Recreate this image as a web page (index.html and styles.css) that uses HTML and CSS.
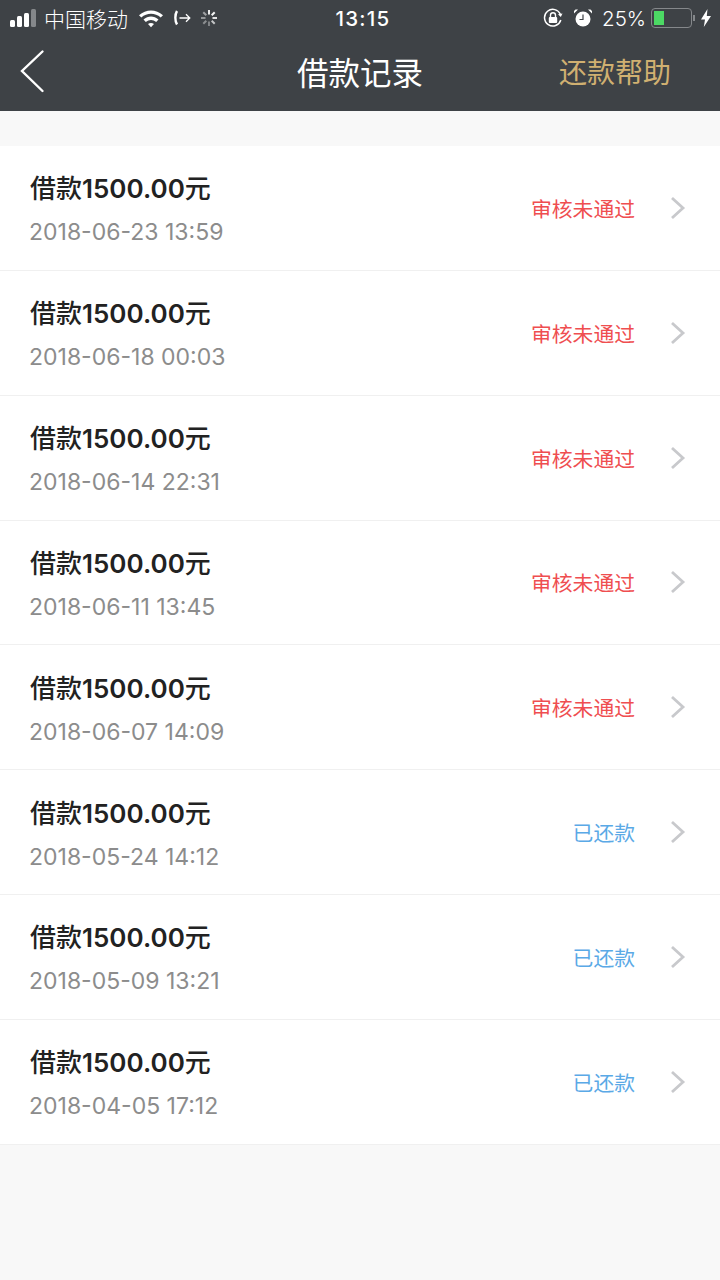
FILE: index.html
```html
<!DOCTYPE html>
<html lang="zh-CN">
<head>
    <meta charset="UTF-8">
    <meta name="viewport" content="width=device-width, initial-scale=1.0">
    <title>借款记录</title>
    <link rel="stylesheet" href="styles.css">
</head>
<body>
    <div class="header">
        <div class="status-bar">
            <div class="status-left">
                <div class="signal">
                    <span class="bar b1"></span><span class="bar b2"></span><span class="bar b3"></span><span class="bar b4"></span>
                </div>
                <span class="carrier">中国移动</span>
                <svg class="wifi" width="26" height="20" viewBox="0 0 26 20">
                    <path d="M1 7.200C8 .8 18 .8 25 7.200l-2.300 2.400C17 4.600 9 4.600 3.300 9.600z" fill="#fff"/>
                    <path d="M5.500 11.500c4.500-4 10.500-4 15 0l-2.300 2.400c-3.200-2.700-7.200-2.700-10.400 0z" fill="#fff"/>
                    <path d="M10 16c1.800-1.500 4.200-1.500 6 0l-3 3.200z" fill="#fff"/>
                </svg>
                <svg class="call" width="18" height="18" viewBox="0 0 18 18" fill="none" stroke="#fff">
                    <path d="M4 2C1.800 5.500 1.800 12 4 15.500" stroke-width="2.400"/>
                    <path d="M6.500 9h10M13 5.200 16.800 9 13 12.800" stroke-width="1.300"/>
                </svg>
                <svg class="spinner" width="18" height="18" viewBox="0 0 18 18" stroke="#fff" stroke-width="2">
                    <path d="M9 1v4.500" opacity=".9"/>
                    <path d="M14.700 3.300l-3 3" opacity=".95"/>
                    <path d="M17 9h-4.500" opacity=".85"/>
                    <path d="M14.700 14.700l-3-3" opacity=".7"/>
                    <path d="M9 17v-4.500" opacity=".35"/>
                    <path d="M3.300 14.700l3-3" opacity=".4"/>
                    <path d="M1 9h4.500" opacity=".45"/>
                    <path d="M3.300 3.300l3 3" opacity=".5"/>
                </svg>
            </div>
            <div class="clock">13:15</div>
            <div class="status-right">
                <svg class="lock" width="20" height="20" viewBox="0 0 20 20" fill="none" stroke="#fff">
                    <path d="M17.800 12A8.300 8.300 0 1 1 17.500 6.500" stroke-width="1.500"/>
                    <path d="M19.500 5.500 17.800 9 15 6.200z" fill="#fff" stroke="none"/>
                    <rect x="5.800" y="9" width="8.400" height="6" rx="1" fill="#fff" stroke="none"/>
                    <path d="M7.500 9V7.200a2.500 2.500 0 0 1 5 0V9" stroke-width="1.400"/>
                </svg>
                <svg class="alarm" width="20" height="20" viewBox="0 0 20 20">
                    <circle cx="10" cy="11" r="7.500" fill="#fff"/>
                    <path d="M1 5.500 5 1.500 2.500 1.500 1 3zM19 5.500 15 1.500 17.500 1.500 19 3z" fill="#fff"/>
                    <path d="M10 6.500V11.500H6.500" fill="none" stroke="#3e4246" stroke-width="1.200"/>
                </svg>
                <span class="percent">25%</span>
                <div class="battery"><span class="battery-level"></span></div>
                <span class="battery-tip"></span>
                <svg class="bolt" width="12" height="20" viewBox="0 0 12 20">
                    <path d="M7.500 1 1 11.500h4L3.800 19 11 8H6.800z" fill="#fff"/>
                </svg>
            </div>
        </div>
        <div class="nav">
            <a class="back">
                <svg width="26" height="44" viewBox="0 0 26 44" fill="none" stroke="#fff" stroke-width="2.400" stroke-linecap="round">
                    <path d="M22.500 2.500 2 22 22.500 42"/>
                </svg>
            </a>
            <h1 class="title">借款记录</h1>
            <a class="help">还款帮助</a>
        </div>
    </div>

    <div class="records">
        <div class="record">
            <div class="info">
                <div class="amount">借款<span class="num">1500.00</span>元</div>
                <div class="date">2018-06-23 13:59</div>
            </div>
            <span class="state rejected">审核未通过</span>
            <svg class="arrow" width="16" height="24" viewBox="0 0 16 24"><path d="M2 2l11 10L2 22"/></svg>
        </div>
        <div class="record">
            <div class="info">
                <div class="amount">借款<span class="num">1500.00</span>元</div>
                <div class="date">2018-06-18 00:03</div>
            </div>
            <span class="state rejected">审核未通过</span>
            <svg class="arrow" width="16" height="24" viewBox="0 0 16 24"><path d="M2 2l11 10L2 22"/></svg>
        </div>
        <div class="record">
            <div class="info">
                <div class="amount">借款<span class="num">1500.00</span>元</div>
                <div class="date">2018-06-14 22:31</div>
            </div>
            <span class="state rejected">审核未通过</span>
            <svg class="arrow" width="16" height="24" viewBox="0 0 16 24"><path d="M2 2l11 10L2 22"/></svg>
        </div>
        <div class="record">
            <div class="info">
                <div class="amount">借款<span class="num">1500.00</span>元</div>
                <div class="date">2018-06-11 13:45</div>
            </div>
            <span class="state rejected">审核未通过</span>
            <svg class="arrow" width="16" height="24" viewBox="0 0 16 24"><path d="M2 2l11 10L2 22"/></svg>
        </div>
        <div class="record">
            <div class="info">
                <div class="amount">借款<span class="num">1500.00</span>元</div>
                <div class="date">2018-06-07 14:09</div>
            </div>
            <span class="state rejected">审核未通过</span>
            <svg class="arrow" width="16" height="24" viewBox="0 0 16 24"><path d="M2 2l11 10L2 22"/></svg>
        </div>
        <div class="record">
            <div class="info">
                <div class="amount">借款<span class="num">1500.00</span>元</div>
                <div class="date">2018-05-24 14:12</div>
            </div>
            <span class="state repaid">已还款</span>
            <svg class="arrow" width="16" height="24" viewBox="0 0 16 24"><path d="M2 2l11 10L2 22"/></svg>
        </div>
        <div class="record">
            <div class="info">
                <div class="amount">借款<span class="num">1500.00</span>元</div>
                <div class="date">2018-05-09 13:21</div>
            </div>
            <span class="state repaid">已还款</span>
            <svg class="arrow" width="16" height="24" viewBox="0 0 16 24"><path d="M2 2l11 10L2 22"/></svg>
        </div>
        <div class="record">
            <div class="info">
                <div class="amount">借款<span class="num">1500.00</span>元</div>
                <div class="date">2018-04-05 17:12</div>
            </div>
            <span class="state repaid">已还款</span>
            <svg class="arrow" width="16" height="24" viewBox="0 0 16 24"><path d="M2 2l11 10L2 22"/></svg>
        </div>
    </div>
</body>
</html>
```

FILE: styles.css
```css
html, body {
    height: 100%;
}
body {
    margin: 0;
    background-color: #f8f8f8;
    font-family: Inter, "Noto Sans CJK SC", sans-serif;
    overflow: hidden;
}
.header {
    height: 111px;
    background-color: #3e4246;
    color: #fff;
}
.status-bar {
    position: relative;
    display: flex;
    justify-content: space-between;
    align-items: center;
    height: 36px;
    padding: 0 8px 0 10px;
    font-family: Inter, "Noto Sans CJK SC", sans-serif;
    font-size: 20px;
}
.status-left, .status-right {
    display: flex;
    align-items: center;
}
.signal {
    display: flex;
    align-items: flex-end;
    gap: 2px;
    height: 18px;
}
.bar {
    width: 5px;
    border-radius: 1.500px;
    background-color: #fff;
}
.b1 { height: 7px; }
.b2 { height: 11px; }
.b3 { height: 14px; }
.b4 { height: 18px; background-color: #85888b; }
.carrier {
    margin-left: 8px;
    font-family: "Noto Sans CJK SC", sans-serif;
    font-weight: 300;
    font-size: 21px;
}
.wifi {
    margin-left: 10px;
}
.call {
    margin-left: 9px;
}
.spinner {
    margin-left: 9px;
}
.clock {
    position: absolute;
    left: 6px;
    right: 0;
    text-align: center;
    font-size: 20.500px;
    font-weight: 500;
    letter-spacing: 1.200px;
}
.lock {
    margin-right: 10px;
}
.alarm {
    margin-right: 9px;
}
.percent {
    margin-right: 5px;
    font-size: 20.500px;
    font-weight: 300;
}
.battery {
    box-sizing: border-box;
    width: 41px;
    height: 20px;
    padding: 2px;
    border: 1.500px solid #85888b;
    border-radius: 4px;
}
.battery-level {
    display: block;
    width: 10px;
    height: 100%;
    background-color: #4cd964;
}
.battery-tip {
    width: 2px;
    height: 6px;
    margin-left: 1px;
    background-color: #85888b;
}
.bolt {
    margin-left: 5px;
}
.nav {
    position: relative;
    display: flex;
    justify-content: space-between;
    align-items: center;
    height: 70px;
    padding: 0 49px 0 20px;
}
.back {
    display: flex;
}
.title {
    position: absolute;
    left: 0;
    right: 0;
    margin: 0;
    text-align: center;
    font-family: "Noto Sans CJK SC", sans-serif;
    font-size: 31.500px;
    font-weight: 400;
}
.help {
    font-family: "Noto Sans CJK SC", sans-serif;
    font-size: 28px;
    font-weight: 400;
    color: #d0b071;
}
.records {
    margin-top: 35px;
    background-color: #fff;
}
.record {
    box-sizing: border-box;
    display: flex;
    align-items: center;
    height: 124.850px;
    padding: 0 34px 0 30px;
    border-bottom: 1.500px solid #f0f0f0;
}
.info {
    flex: 1;
    padding-top: 3px;
}
.amount {
    font-family: Inter, "Noto Sans CJK SC", sans-serif;
    font-size: 26px;
    font-weight: 500;
    line-height: 36px;
    color: #222;
}
.num {
    font-weight: 600;
}
.date {
    margin-top: 10px;
    margin-left: -1px;
    font-family: Inter, sans-serif;
    font-size: 23px;
    line-height: 30px;
    color: #8c8c8c;
}
.state {
    margin-right: 35px;
    font-family: "Noto Sans CJK SC", sans-serif;
    font-size: 20.800px;
    font-weight: 400;
}
.rejected {
    color: #ef4e50;
}
.repaid {
    color: #5aa9e6;
}
.arrow {
    fill: none;
    stroke: #c8c9cc;
    stroke-width: 2.800;
}
```
